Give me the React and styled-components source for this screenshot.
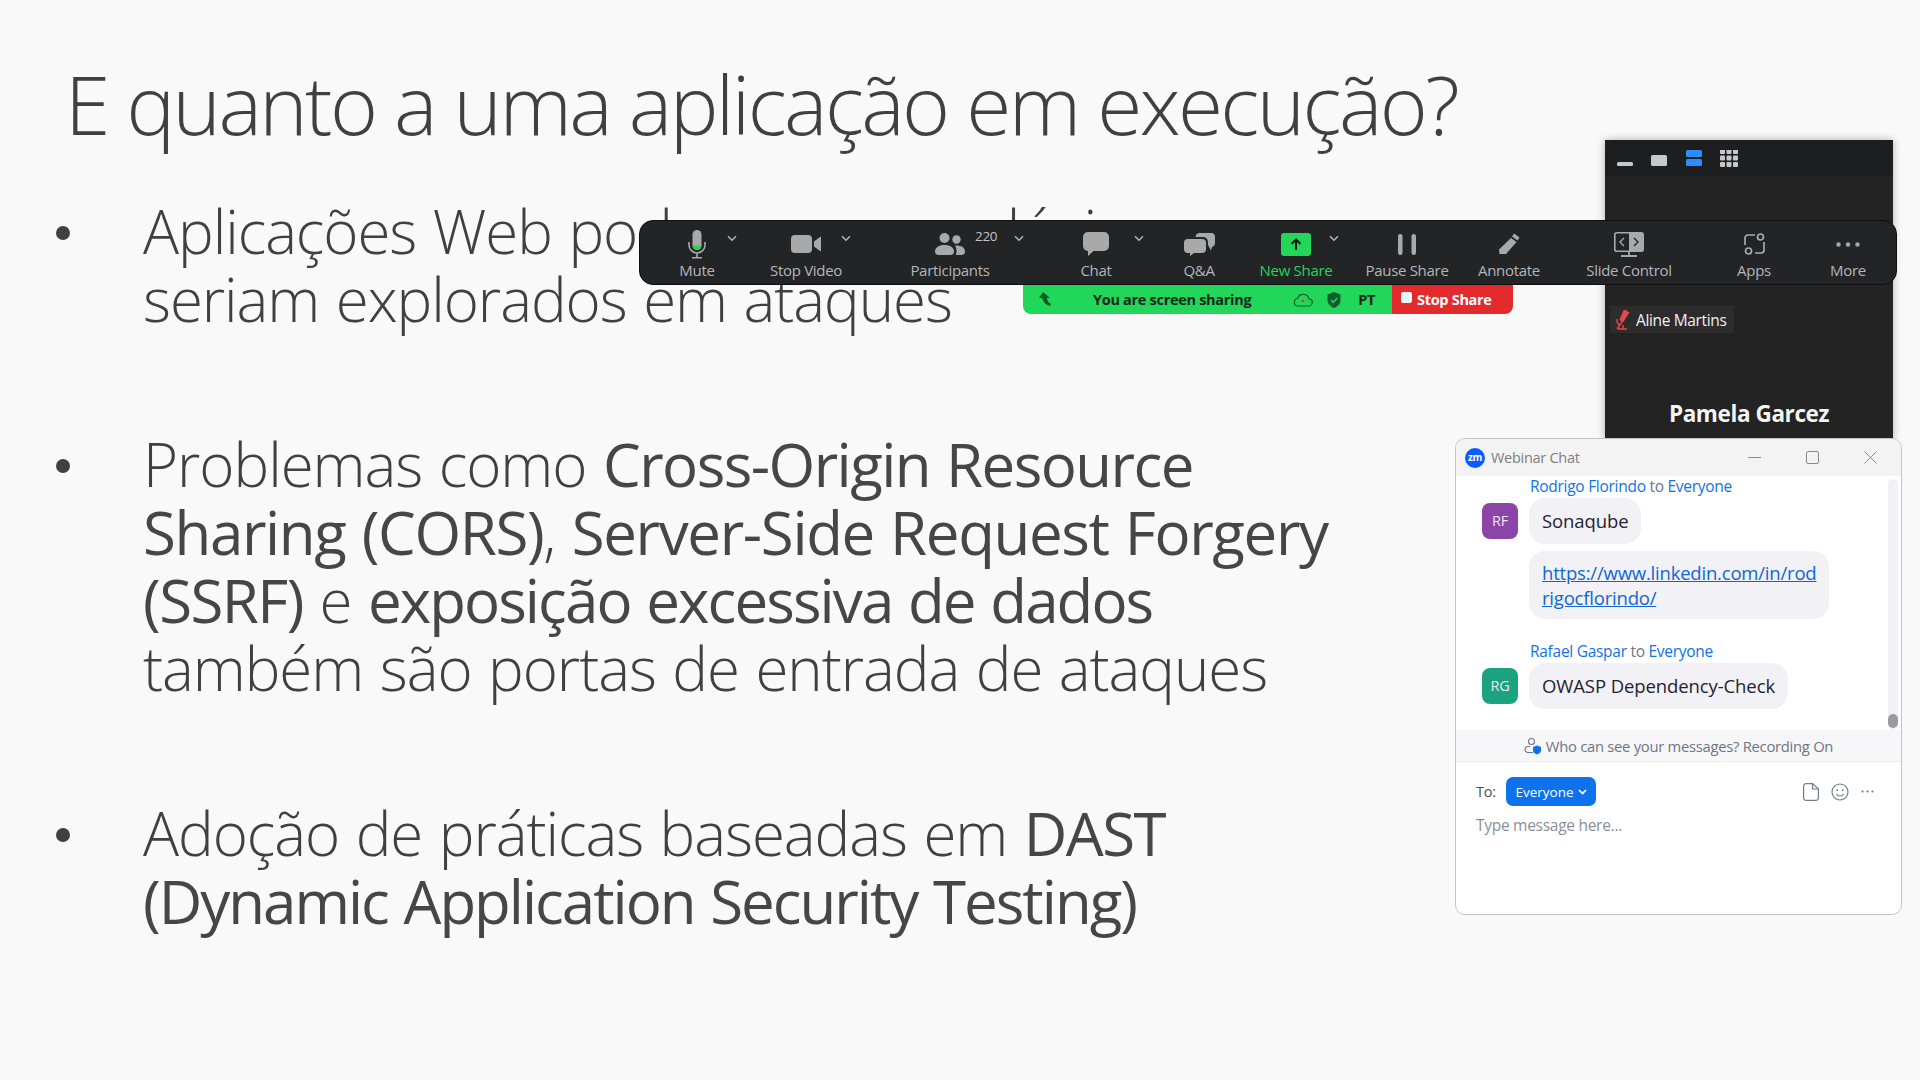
import React from "react";
import styled, { createGlobalStyle } from "styled-components";

const Global = createGlobalStyle`
  html, body { margin: 0; padding: 0; background: #f9f9f9; }
  * { box-sizing: border-box; }
`;

const Page = styled.div`
  position: relative;
  width: 1920px;
  height: 1080px;
  overflow: hidden;
  background: #f9f9f9;
  font-family: "Open Sans", "Noto Sans", sans-serif;
`;

const Slide = styled.main`
  display: flex;
  flex-direction: column;
  padding: 55px 0 0 56px;
  color: #404040;
`;

const Title = styled.h1`
  margin: 0 0 46px 9px;
  font-size: 82px;
  line-height: 96px;
  font-weight: 300;
  letter-spacing: -2.6px;
  white-space: nowrap;
`;

const Bullets = styled.ul`
  list-style: none;
  margin: 0;
  padding: 0;
  display: flex;
  flex-direction: column;
  gap: 97px;
`;

const Bullet = styled.li`
  display: flex;
  font-size: 60px;
  line-height: 68px;
  font-weight: 300;
  letter-spacing: -1.05px;
  word-spacing: 2px;
  white-space: nowrap;
`;

const Dot = styled.span`
  flex: none;
  width: 14px;
  height: 14px;
  margin: 29px 73px 0 0;
  border-radius: 50%;
  background: #404040;
`;

const Strong = styled.span`
  font-weight: 400;
  letter-spacing: ${(p) => p.$track ?? -1.55}px;
  color: #464646;
`;

const VideoPanel = styled.aside`
  position: absolute;
  left: 1605px;
  top: 140px;
  width: 288px;
  height: 300px;
  background: #232323;
  border-radius: 3px 3px 0 0;
  box-shadow: 0 0 8px rgba(0, 0, 0, 0.3);
  display: flex;
  flex-direction: column;
`;

const PanelHead = styled.div`
  flex: none;
  height: 36px;
  padding: 4px 0 0 12px;
  background: #1d1e20;
  display: flex;
  align-items: center;
`;

const NameTag = styled.div`
  display: flex;
  align-items: center;
  gap: 5px;
  width: 124px;
  height: 27px;
  margin: 130px 0 0 5px;
  padding-left: 5px;
  background: #2c2c2c;
  color: #f0f0f0;
  font-size: 15.5px;
  letter-spacing: -0.35px;
`;

const SpeakerName = styled.div`
  margin-top: 67px;
  text-align: center;
  color: #f4f4f4;
  font-size: 22.5px;
  line-height: 28px;
  font-weight: 700;
  letter-spacing: -0.4px;
`;

const Toolbar = styled.nav`
  position: absolute;
  left: 639px;
  top: 220px;
  width: 1258px;
  height: 65px;
  padding-left: 2px;
  display: flex;
  background: #232426;
  border: 1px solid #0e0e0e;
  border-radius: 14px;
  z-index: 3;
`;

const Item = styled.div`
  position: relative;
  flex: none;
  width: ${(p) => p.$w}px;
  display: flex;
  flex-direction: column;
  align-items: center;
`;

const IconSlot = styled.div`
  height: 30px;
  margin-top: 8px;
  display: flex;
  align-items: center;
  justify-content: center;
`;

const ItemLabel = styled.div`
  margin-top: 2px;
  font-size: 15px;
  line-height: 18px;
  letter-spacing: -0.3px;
  color: ${(p) => (p.$green ? "#22d65a" : "#b2b6bb")};
  white-space: nowrap;
`;

const Chevron = styled.svg`
  position: absolute;
  top: 14px;
  right: ${(p) => p.$right}px;
`;

const Count = styled.span`
  position: absolute;
  left: 115px;
  top: 6px;
  font-size: 13.5px;
  line-height: 18px;
  letter-spacing: -0.3px;
  color: #c4c4c4;
`;

const ShareBar = styled.div`
  position: absolute;
  left: 1023px;
  top: 285px;
  width: 490px;
  height: 29px;
  display: flex;
  border-radius: 0 0 8px 8px;
  overflow: hidden;
  z-index: 2;
  font-size: 14.5px;
  font-weight: 700;
  letter-spacing: -0.3px;
`;

const ShareStatus = styled.div`
  width: 369px;
  display: flex;
  align-items: center;
  background: #22d65a;
  color: #16261c;
  padding-left: 15px;
`;

const ShareText = styled.span`
  margin: 0 42px 0 41px;
`;

const ShieldSlot = styled.span`
  display: flex;
  margin-left: 14px;
`;

const StatusPt = styled.span`
  margin-left: 17px;
`;

const StopShare = styled.div`
  flex: 1;
  display: flex;
  align-items: center;
  gap: 5px;
  padding: 0 0 0 9px;
  background: #e32a2c;
  color: #fff;
`;

const StopSquare = styled.span`
  width: 11px;
  height: 11px;
  margin-top: -4px;
  border-radius: 2px;
  background: #e8fbfb;
`;

const ChatWindow = styled.section`
  position: absolute;
  left: 1455px;
  top: 438px;
  width: 447px;
  height: 477px;
  display: flex;
  flex-direction: column;
  background: #fff;
  border: 1px solid #c4c4c4;
  border-radius: 10px;
  overflow: hidden;
  z-index: 4;
  font-size: 15.5px;
  letter-spacing: -0.28px;
`;

const ChatHead = styled.header`
  flex: none;
  height: 37px;
  display: flex;
  align-items: center;
  padding: 0 2px 0 9px;
  background: #f3f3f3;
  color: #808080;
  font-size: 14.5px;
`;

const Logo = styled.span`
  width: 20px;
  height: 20px;
  margin-right: 6px;
  border-radius: 50%;
  background: #0b5cff;
  color: #fff;
  font-size: 10px;
  font-weight: 700;
  line-height: 19px;
  letter-spacing: -0.4px;
  text-align: center;
`;

const HeadTitle = styled.span`
  flex: 1;
`;

const WinButton = styled.span`
  width: 58px;
  display: flex;
  justify-content: center;
`;

const Messages = styled.div`
  position: relative;
  flex: 1;
  padding: 0 0 0 26px;
`;

const Track = styled.div`
  position: absolute;
  top: 3px;
  right: 3px;
  bottom: 0;
  width: 10px;
  border-radius: 5px;
  background: #f2f2f6;
`;

const Thumb = styled.div`
  position: absolute;
  left: 0;
  bottom: 2px;
  width: 10px;
  height: 14px;
  border-radius: 5px;
  background: #9a9ba1;
`;

const Sender = styled.div`
  margin-left: 48px;
  line-height: 20px;
  color: #0e72ed;
`;

const Muted = styled.span`
  color: #6e7680;
`;

const MessageRow = styled.div`
  display: flex;
  align-items: center;
  gap: 11px;
  margin-top: ${(p) => p.$top || 0}px;
`;

const Avatar = styled.div`
  flex: none;
  width: 36px;
  height: 36px;
  border-radius: 8px;
  background: ${(p) => p.$bg};
  color: #f0e6f5;
  font-size: 14.5px;
  line-height: 36px;
  text-align: center;
`;

const Bubble = styled.div`
  padding: ${(p) => (p.$link ? "9px 13px 9px 13px" : "10px 13px 11px")};
  margin-left: ${(p) => (p.$indent ? "47px" : 0)};
  margin-top: ${(p) => p.$top || 0}px;
  width: max-content;
  border-radius: 16px;
  background: #f2f2f6;
  color: #1f2330;
  font-size: 18.5px;
  line-height: 25px;
  letter-spacing: -0.1px;
`;

const LinkText = styled.a`
  color: #0e65d8;
  text-decoration: underline;
  letter-spacing: -0.2px;
`;

const Notice = styled.div`
  flex: none;
  height: 32px;
  padding-top: 1px;
  display: flex;
  align-items: center;
  justify-content: center;
  gap: 4px;
  background: #f7f7fa;
  border-bottom: 1px solid #ececf0;
  color: #6e7680;
  font-size: 14.8px;
`;

const Composer = styled.div`
  flex: none;
  height: 152px;
  padding: 15px 27px 0 20px;
`;

const ToRow = styled.div`
  display: flex;
  align-items: center;
  color: #4a4f58;
  font-size: 14.5px;
`;

const ToLabel = styled.span`
  width: 30px;
`;

const EveryoneButton = styled.button`
  width: 90px;
  height: 29px;
  display: flex;
  align-items: center;
  justify-content: center;
  gap: 4px;
  padding: 0;
  border: 0;
  border-radius: 7px;
  background: #0e72ed;
  color: #fff;
  font: inherit;
  font-size: 13.5px;
`;

const ToolIcons = styled.div`
  margin-left: auto;
  display: flex;
  align-items: center;
  gap: 12px;
`;

const Placeholder = styled.div`
  margin-top: 9px;
  line-height: 20px;
  color: #8a8f98;
`;

const Chev = ({ right }) => (
  <Chevron $right={right} width="10" height="7" viewBox="0 0 10 7" fill="none" stroke="#b4b4b4" strokeWidth="1.5">
    <path d="M1 1.2 5 5.2 9 1.2" />
  </Chevron>
);

const G = "#a9a9a9";

const MicIcon = () => (
  <svg width="18" height="29" viewBox="0 0 18 29">
    <rect x="4.5" y="0" width="9" height="20" rx="4.5" fill={G} />
    <path d="M4.5 15.5h9v0a4.5 4.5 0 0 1-9 0z" fill="#22d65a" />
    <path d="M1 12v3a8 8 0 0 0 16 0v-3M9 23v4M4 27.7h10" fill="none" stroke={G} strokeWidth="1.6" />
  </svg>
);
const VideoIcon = () => (
  <svg width="30" height="18" viewBox="0 0 30 18" fill={G}>
    <rect x="0" y="0" width="21" height="18" rx="4" />
    <path d="M23 6.5 29 2a.6.6 0 0 1 1 .5v13a.6.6 0 0 1-1 .5l-6-4.5z" />
  </svg>
);
const PeopleIcon = () => (
  <svg width="30" height="22" viewBox="0 0 30 22" fill={G}>
    <circle cx="9.5" cy="5" r="5" />
    <circle cx="21.5" cy="6.5" r="4.2" />
    <path d="M0 18.5C0 14.5 4 12 9.5 12s9.5 2.5 9.5 6.5c0 2-1.5 3.5-3.5 3.5h-12C1.5 22 0 20.5 0 18.5z" />
    <path d="M20 12.5c5.500-.5 10 1.500 10 6 0 2-1.300 3.500-3.300 3.500H20.500c.8-1 1-2.200 1-3.500 0-2.500-.5-4.300-1.500-6z" />
  </svg>
);
const ChatIcon = () => (
  <svg width="26" height="24" viewBox="0 0 26 24" fill={G}>
    <path d="M5 0h16a5 5 0 0 1 5 5v9a5 5 0 0 1-5 5H10.500L5 24v-5.100A5 5 0 0 1 0 14V5a5 5 0 0 1 5-5z" />
  </svg>
);
const QaIcon = () => (
  <svg width="31" height="23" viewBox="0 0 31 23" fill={G}>
    <path d="M15 0h12a4 4 0 0 1 4 4v6c0 2-1.500 3.500-3 4l-1 3.500-3-5.500V9a5 5 0 0 0-5-5h-7.500A4.500 4.500 0 0 1 15 0z" />
    <path d="M4 6h14a4 4 0 0 1 4 4v6a4 4 0 0 1-4 4H10l-4 3v-3H4a4 4 0 0 1-4-4v-6a4 4 0 0 1 4-4z" />
  </svg>
);
const NewShareIcon = () => (
  <svg width="30" height="23" viewBox="0 0 30 23">
    <rect width="30" height="23" rx="3" fill="#22d65a" />
    <path d="M15 17V7M10.500 11 15 6.500 19.500 11" fill="none" stroke="#0c1a10" strokeWidth="2" />
  </svg>
);
const PauseIcon = () => (
  <svg width="18" height="21" viewBox="0 0 18 21" fill={G}>
    <rect x="0" y="0" width="4.500" height="21" rx="2.200" />
    <rect x="13.500" y="0" width="4.500" height="21" rx="2.200" />
  </svg>
);
const PencilIcon = () => (
  <svg width="22" height="22" viewBox="0 0 22 22" fill={G}>
    <path d="M16 0.500 21.500 4.500 19.500 7.500 14 3.500z" />
    <path d="M13 5 18.500 9 8 21H1.500L1 16.500z" />
  </svg>
);
const SlideIcon = () => (
  <svg width="30" height="25" viewBox="0 0 30 25">
    <rect x="0.800" y="0.800" width="28.400" height="18.400" rx="2" fill="#232426" stroke={G} strokeWidth="1.600" />
    <path d="M15 1h12a2 2 0 0 1 2 2v14a2 2 0 0 1-2 2H15z" fill={G} />
    <path d="M20 6l4 4-4 4" fill="none" stroke="#232426" strokeWidth="1.400" />
    <path d="M10 6 6 10l4 4" fill="none" stroke={G} strokeWidth="1.400" />
    <path d="M15 19v4M7 24h16" stroke={G} strokeWidth="1.800" />
  </svg>
);
const AppsIcon = () => (
  <svg width="21" height="22" viewBox="0 0 21 22" fill="none" stroke={G} strokeWidth="1.700">
    <path d="M11 2H4a3 3 0 0 0-3 3v7" />
    <path d="M20 9v8a3 3 0 0 1-3 3H11" />
    <circle cx="16.500" cy="4" r="3" />
    <circle cx="4.500" cy="18" r="3" />
  </svg>
);
const DotsIcon = () => (
  <svg width="24" height="5" viewBox="0 0 24 5" fill={G}>
    <circle cx="2.500" cy="2.500" r="2.200" />
    <circle cx="12" cy="2.500" r="2.200" />
    <circle cx="21.500" cy="2.500" r="2.200" />
  </svg>
);

const ViewIcons = () => (
  <svg width="124" height="20" viewBox="0 0 124 20">
    <rect x="0" y="12" width="16" height="4" rx="1.500" fill="#c8c8c8" />
    <rect x="34" y="5" width="16" height="11" rx="1.500" fill="#c8c8c8" />
    <rect x="69" y="0" width="16" height="7" rx="1.500" fill="#2d8cff" />
    <rect x="69" y="9" width="16" height="7" rx="1.500" fill="#2d8cff" />
    {[0, 1, 2].flatMap((r) =>
      [0, 1, 2].map((c) => <rect key={`${r}${c}`} x={103 + c * 6.5} y={-1 + r * 6.5} width="5" height="5" rx="1" fill="#c8c8c8" />)
    )}
  </svg>
);

const MutedMic = () => (
  <svg width="16" height="20" viewBox="0 0 16 20" fill="none" stroke="#e5484d" strokeWidth="1.400">
    <path d="M9 1c2-1 4 .5 3 3l-3 6c-1 2-4 1-3.500-1z" fill="#e5484d" />
    <path d="M2 9c-.5 3 .5 5 3 6M8 15v4M3 19h9M14 2 2 19" />
  </svg>
);

const ArrowPhone = () => (
  <svg width="14" height="15" viewBox="0 0 14 15" fill="#0a5a28">
    <path d="M5 0 1 6h3l1 2c1 3 3 5 7 6l1-2c-2-1-4-3-4-6h3z" />
  </svg>
);
const CloudIcon = () => (
  <svg width="20" height="14" viewBox="0 0 20 14" fill="none" stroke="#0f5c2d" strokeWidth="1.200">
    <path d="M4.500 13h11a3.500 3.500 0 0 0 .5-7 6 6 0 0 0-11.500-.5A3.800 3.800 0 0 0 4.500 13z" />
    <circle cx="10" cy="8" r="1.300" fill="#d33" stroke="none" />
  </svg>
);
const ShieldIcon = () => (
  <svg width="14" height="16" viewBox="0 0 14 16">
    <path d="M7 0 13.500 2.500V8c0 4-3 6.500-6.500 8C3.500 14.500.5 12 .5 8V2.500z" fill="#0f5c2d" />
    <path d="M4 8l2.300 2.300L10.300 6" fill="none" stroke="#22d65a" strokeWidth="1.500" />
  </svg>
);

const WinMin = () => (
  <svg width="13" height="13" viewBox="0 0 13 13" stroke="#8a8a8a" fill="none"><path d="M0 6.500h13" /></svg>
);
const WinMax = () => (
  <svg width="13" height="13" viewBox="0 0 13 13" stroke="#8a8a8a" fill="none"><rect x="0.500" y="0.500" width="12" height="12" rx="1.500" /></svg>
);
const WinClose = () => (
  <svg width="13" height="13" viewBox="0 0 13 13" stroke="#8a8a8a" fill="none"><path d="M0.500 0.500l12 12M12.500 0.500l-12 12" /></svg>
);

const NoticeIcon = () => (
  <svg width="18" height="18" viewBox="0 0 18 18" fill="none">
    <circle cx="7.500" cy="4.500" r="3" stroke="#6e7680" strokeWidth="1.100" />
    <path d="M6 9.500H4a3 3 0 0 0 0 6h5" stroke="#6e7680" strokeWidth="1.100" />
    <path d="M13 8.500l4 1.500v3.500c0 2-1.800 3.300-4 4-2.200-.7-4-2-4-4V10z" fill="#0e72ed" />
  </svg>
);
const SmallChevron = () => (
  <svg width="9" height="6" viewBox="0 0 9 6" fill="none" stroke="#fff" strokeWidth="1.700"><path d="M1 1l3.500 3.500L8 1" /></svg>
);
const FileIcon = () => (
  <svg width="16" height="18" viewBox="0 0 16 18" fill="none" stroke="#757a84" strokeWidth="1.200">
    <path d="M3 .6h6.500L15.400 6v9a2.400 2.400 0 0 1-2.400 2.400H3A2.400 2.400 0 0 1 .6 15V3A2.400 2.400 0 0 1 3 .6z" />
    <path d="M9.500 .6V6h5.900" />
  </svg>
);
const SmileIcon = () => (
  <svg width="18" height="18" viewBox="0 0 18 18" fill="none" stroke="#757a84" strokeWidth="1.200">
    <circle cx="9" cy="9" r="8" />
    <circle cx="6.200" cy="7.200" r="0.900" fill="#757a84" stroke="none" />
    <circle cx="11.800" cy="7.200" r="0.900" fill="#757a84" stroke="none" />
    <path d="M5.500 11c1 1.500 2.200 2 3.500 2s2.500-.5 3.500-2" />
  </svg>
);
const SmallDots = () => (
  <svg width="13" height="3" viewBox="0 0 13 3" fill="#757a84">
    <circle cx="1.500" cy="1.500" r="1.100" /><circle cx="6.500" cy="1.500" r="1.100" /><circle cx="11.500" cy="1.500" r="1.100" />
  </svg>
);

export default function App() {
  return (
    <Page>
      <Global />
      <Slide>
        <Title>E quanto a uma aplicação em execução?</Title>
        <Bullets>
          <Bullet>
            <Dot />
            <div>
              Aplicações Web podem carregar lógicas que
              <br />
              seriam explorados em ataques
            </div>
          </Bullet>
          <Bullet>
            <Dot />
            <div>
              Problemas como <Strong>Cross-Origin Resource</Strong>
              <br />
              <Strong $track={-1.37}>Sharing (CORS)</Strong>, <Strong $track={-1.35}>Server-Side Request Forgery</Strong>
              <br />
              <Strong>(SSRF)</Strong> e <Strong $track={-1.9}>exposição excessiva de dados</Strong>
              <br />
              também são portas de entrada de ataques
            </div>
          </Bullet>
          <Bullet>
            <Dot />
            <div>
              Adoção de práticas baseadas em <Strong>DAST</Strong>
              <br />
              <Strong $track={-2}>(Dynamic Application Security Testing)</Strong>
            </div>
          </Bullet>
        </Bullets>
      </Slide>

      <VideoPanel>
        <PanelHead>
          <ViewIcons />
        </PanelHead>
        <NameTag>
          <MutedMic />
          Aline Martins
        </NameTag>
        <SpeakerName>Pamela Garcez</SpeakerName>
      </VideoPanel>

      <Toolbar>
        <Item $w={110}><IconSlot><MicIcon /></IconSlot><ItemLabel>Mute</ItemLabel><Chev right={15} /></Item>
        <Item $w={108}><IconSlot><VideoIcon /></IconSlot><ItemLabel>Stop Video</ItemLabel><Chev right={9} /></Item>
        <Item $w={180}><IconSlot><PeopleIcon /></IconSlot><ItemLabel>Participants</ItemLabel><Count>220</Count><Chev right={16} /></Item>
        <Item $w={112}><IconSlot><ChatIcon /></IconSlot><ItemLabel>Chat</ItemLabel><Chev right={8} /></Item>
        <Item $w={94}><IconSlot><QaIcon /></IconSlot><ItemLabel>Q&amp;A</ItemLabel></Item>
        <Item $w={100}><IconSlot><NewShareIcon /></IconSlot><ItemLabel $green>New Share</ItemLabel><Chev right={7} /></Item>
        <Item $w={122}><IconSlot><PauseIcon /></IconSlot><ItemLabel>Pause Share</ItemLabel></Item>
        <Item $w={82}><IconSlot><PencilIcon /></IconSlot><ItemLabel>Annotate</ItemLabel></Item>
        <Item $w={158}><IconSlot><SlideIcon /></IconSlot><ItemLabel>Slide Control</ItemLabel></Item>
        <Item $w={92}><IconSlot><AppsIcon /></IconSlot><ItemLabel>Apps</ItemLabel></Item>
        <Item $w={96}><IconSlot><DotsIcon /></IconSlot><ItemLabel>More</ItemLabel></Item>
      </Toolbar>

      <ShareBar>
        <ShareStatus>
          <ArrowPhone />
          <ShareText>You are screen sharing</ShareText>
          <CloudIcon />
          <ShieldSlot><ShieldIcon /></ShieldSlot>
          <StatusPt>PT</StatusPt>
        </ShareStatus>
        <StopShare>
          <StopSquare />
          Stop Share
        </StopShare>
      </ShareBar>

      <ChatWindow>
        <ChatHead>
          <Logo>zm</Logo>
          <HeadTitle>Webinar Chat</HeadTitle>
          <WinButton><WinMin /></WinButton>
          <WinButton><WinMax /></WinButton>
          <WinButton><WinClose /></WinButton>
        </ChatHead>
        <Messages>
          <Sender>Rodrigo Florindo <Muted>to</Muted> Everyone</Sender>
          <MessageRow $top={2}>
            <Avatar $bg="#8c44a8">RF</Avatar>
            <Bubble>Sonaqube</Bubble>
          </MessageRow>
          <Bubble $indent $link $top={7}>
            <LinkText>https://www.linkedin.com/in/rod</LinkText>
            <br />
            <LinkText>rigocflorindo/</LinkText>
          </Bubble>
          <MessageRow $top={22}>
            <span />
          </MessageRow>
          <Sender>Rafael Gaspar <Muted>to</Muted> Everyone</Sender>
          <MessageRow $top={2}>
            <Avatar $bg="#1ba37f">RG</Avatar>
            <Bubble>OWASP Dependency-Check</Bubble>
          </MessageRow>
          <Track><Thumb /></Track>
        </Messages>
        <Notice>
          <NoticeIcon />
          Who can see your messages? Recording On
        </Notice>
        <Composer>
          <ToRow>
            <ToLabel>To:</ToLabel>
            <EveryoneButton>Everyone <SmallChevron /></EveryoneButton>
            <ToolIcons>
              <FileIcon />
              <SmileIcon />
              <SmallDots />
            </ToolIcons>
          </ToRow>
          <Placeholder>Type message here...</Placeholder>
        </Composer>
      </ChatWindow>
    </Page>
  );
}
